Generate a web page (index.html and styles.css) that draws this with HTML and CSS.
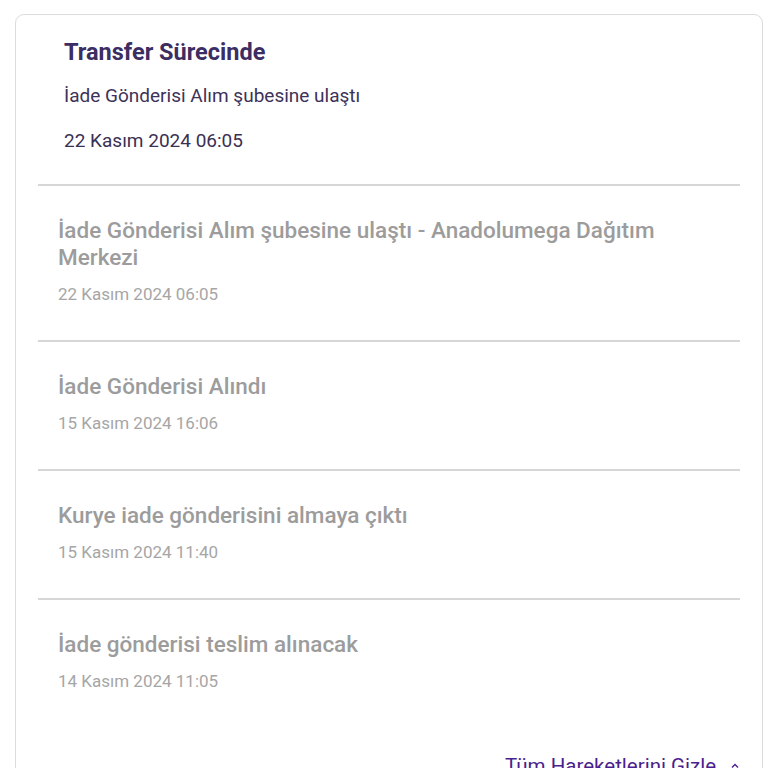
FILE: index.html
```html
<!DOCTYPE html>
<html lang="tr">
<head>
<meta charset="utf-8">
<link rel="stylesheet" href="styles.css">
</head>
<body>
<div class="card">
  <div class="head">
    <div class="head-title">Transfer Sürecinde</div>
    <div class="head-sub">İade Gönderisi Alım şubesine ulaştı</div>
    <div class="head-date">22 Kasım 2024 06:05</div>
  </div>
  <div class="item">
    <div class="item-title">İade Gönderisi Alım şubesine ulaştı - Anadolumega Dağıtım Merkezi</div>
    <div class="item-date">22 Kasım 2024 06:05</div>
  </div>
  <div class="item">
    <div class="item-title">İade Gönderisi Alındı</div>
    <div class="item-date">15 Kasım 2024 16:06</div>
  </div>
  <div class="item">
    <div class="item-title">Kurye iade gönderisini almaya çıktı</div>
    <div class="item-date">15 Kasım 2024 11:40</div>
  </div>
  <div class="item item-last">
    <div class="item-title">İade gönderisi teslim alınacak</div>
    <div class="item-date">14 Kasım 2024 11:05</div>
  </div>
  <div class="foot">
    <a class="toggle" href="#">Tüm Hareketlerini Gizle
      <svg class="chev" width="10" height="10" viewBox="0 0 10 10"><path d="M2 6.5 L5 3.5 L8 6.5" fill="none" stroke="currentColor" stroke-width="1.4"/></svg>
    </a>
  </div>
</div>
</body>
</html>
```
FILE: styles.css
```css
html, body {
  margin: 0;
  padding: 0;
  background: #ffffff;
}
body {
  font-family: Roboto, "Liberation Sans", sans-serif;
}
.card {
  margin: 14px 5px 0 15px;
  border: 1px solid #dcdcdc;
  border-radius: 9px;
  padding: 0 22px 40px;
  background: #fff;
}
.head {
  padding: 22px 26px 31px;
  border-bottom: 2px solid #d6d6d6;
}
.head-title {
  font-size: 23.5px;
  line-height: 30px;
  font-weight: 700;
  color: #3c2d62;
}
.head-sub {
  margin-top: 17px;
  font-size: 19px;
  line-height: 24px;
  color: #3d3258;
}
.head-date {
  margin-top: 21px;
  font-size: 19px;
  line-height: 24px;
  color: #3a3052;
}
.item {
  padding: 31px 20px 36px;
  border-bottom: 2px solid #d6d6d6;
}
.item-last {
  border-bottom: none;
}
.item-title {
  font-size: 22.5px;
  line-height: 27px;
  font-weight: 500;
  color: #9c9c9c;
}
.item-date {
  margin-top: 13px;
  font-size: 17px;
  line-height: 20px;
  color: #a6a6a6;
}
.foot {
  display: flex;
  justify-content: flex-end;
  margin-top: 27px;
}
.toggle {
  display: flex;
  align-items: center;
  gap: 14px;
  font-size: 20.5px;
  line-height: 24px;
  color: #4a1f8e;
  text-decoration: none;
}
.chev {
  display: block;
}
```
